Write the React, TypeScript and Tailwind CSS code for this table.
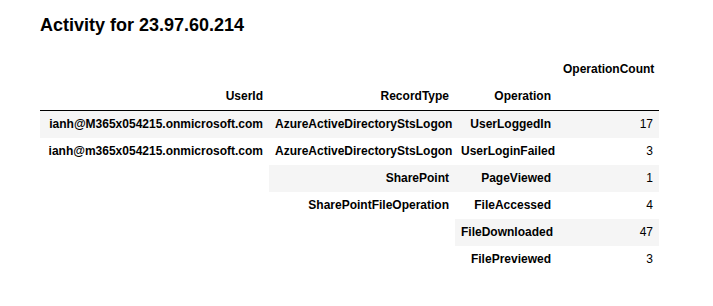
const font = { fontFamily: '"Liberation Sans", Arial, sans-serif' }

const th = "px-[6px] py-[6px] text-right align-top font-bold whitespace-nowrap leading-[15px]"
const td = "px-[6px] py-[6px] text-right align-top font-normal whitespace-nowrap leading-[15px]"
const odd = "bg-[#f5f5f5]"

export default function App() {
  return (
    <div className="min-h-screen bg-white text-black" style={font}>
      <div className="pl-[40px] pt-[14px]">
        <h3 className="text-[18px] font-bold leading-[22px]">Activity for 23.97.60.214</h3>

        <table className="mt-[20px] w-[619px] table-fixed border-collapse text-[12px]">
          <colgroup>
            <col className="w-[229px]" />
            <col className="w-[186px]" />
            <col className="w-[102px]" />
            <col className="w-[102px]" />
          </colgroup>
          <thead className="border-b border-black">
            <tr>
              <th className={th}></th>
              <th className={th}></th>
              <th className={th}></th>
              <th className={th}>OperationCount</th>
            </tr>
            <tr>
              <th className={th}>UserId</th>
              <th className={th}>RecordType</th>
              <th className={th}>Operation</th>
              <th className={th}></th>
            </tr>
          </thead>
          <tbody>
            <tr>
              <th className={`${th} ${odd}`}>ianh@M365x054215.onmicrosoft.com</th>
              <th className={`${th} ${odd}`}>AzureActiveDirectoryStsLogon</th>
              <th className={`${th} ${odd}`}>UserLoggedIn</th>
              <td className={`${td} ${odd}`}>17</td>
            </tr>
            <tr>
              <th className={th} rowSpan={5}>ianh@m365x054215.onmicrosoft.com</th>
              <th className={th}>AzureActiveDirectoryStsLogon</th>
              <th className={th}>UserLoginFailed</th>
              <td className={td}>3</td>
            </tr>
            <tr>
              <th className={`${th} ${odd}`}>SharePoint</th>
              <th className={`${th} ${odd}`}>PageViewed</th>
              <td className={`${td} ${odd}`}>1</td>
            </tr>
            <tr>
              <th className={th} rowSpan={3}>SharePointFileOperation</th>
              <th className={th}>FileAccessed</th>
              <td className={td}>4</td>
            </tr>
            <tr>
              <th className={`${th} ${odd}`}>FileDownloaded</th>
              <td className={`${td} ${odd}`}>47</td>
            </tr>
            <tr>
              <th className={th}>FilePreviewed</th>
              <td className={td}>3</td>
            </tr>
          </tbody>
        </table>
      </div>
    </div>
  )
}
